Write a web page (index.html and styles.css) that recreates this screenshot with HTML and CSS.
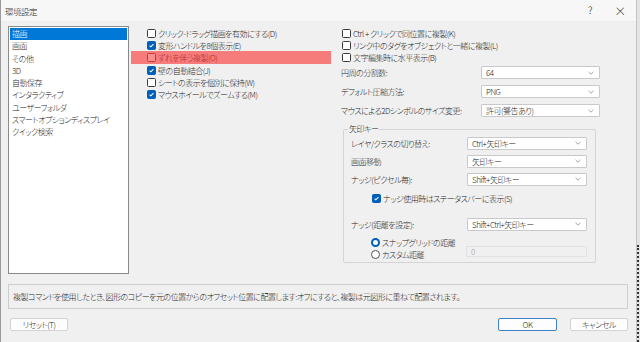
FILE: index.html
```html
<!DOCTYPE html>
<html lang="ja">
<head>
<meta charset="utf-8">
<title>環境設定</title>
<link rel="stylesheet" href="styles.css">
</head>
<body>
<div class="screen">
  <div class="dialog">
    <div class="titlebar">
      <span class="title">環境設定</span>
      <span class="tb-btns"><span class="tb-help">?</span><span class="tb-close">×</span></span>
    </div>
    <div class="content">
      <div class="top">
        <ul class="catlist">
          <li class="sel">描画</li>
          <li>画面</li>
          <li>その他</li>
          <li>3D</li>
          <li>自動保存</li>
          <li>インタラクティブ</li>
          <li>ユーザーフォルダ</li>
          <li>スマートオプションディスプレイ</li>
          <li>クイック検索</li>
        </ul>
        <div class="col1">
          <div class="cbrow"><span class="cb"></span><span>クリック-ドラッグ描画を有効にする(D)</span></div>
          <div class="cbrow"><span class="cb on"><svg viewBox="0 0 9 9"><path d="M2 4.7 L3.7 6.3 L7 2.8"/></svg></span><span>変形ハンドルを8個表示(E)</span></div>
          <div class="cbrow hl"><span class="cb"></span><span>ずれを伴う複製(O)</span></div>
          <div class="cbrow"><span class="cb on"><svg viewBox="0 0 9 9"><path d="M2 4.7 L3.7 6.3 L7 2.8"/></svg></span><span>壁の自動結合(J)</span></div>
          <div class="cbrow"><span class="cb"></span><span>シートの表示を個別に保持(W)</span></div>
          <div class="cbrow"><span class="cb on"><svg viewBox="0 0 9 9"><path d="M2 4.7 L3.7 6.3 L7 2.8"/></svg></span><span>マウスホイールでズームする(M)</span></div>
        </div>
        <div class="col2">
          <div class="cbrow"><span class="cb"></span><span>Ctrl + クリックで同位置に複製(K)</span></div>
          <div class="cbrow"><span class="cb"></span><span>リンク中のタグをオブジェクトと一緒に複製(L)</span></div>
          <div class="cbrow"><span class="cb"></span><span>文字編集時に水平表示(B)</span></div>
          <div class="frow"><span>円周の分割数:</span><span class="dd w119"><span>64</span><svg viewBox="0 0 6 4"><path d="M0.5 0.8 L3 3.2 L5.5 0.8"/></svg></span></div>
          <div class="frow"><span>デフォルト圧縮方法:</span><span class="dd w119"><span>PNG</span><svg viewBox="0 0 6 4"><path d="M0.5 0.8 L3 3.2 L5.5 0.8"/></svg></span></div>
          <div class="frow"><span>マウスによる2Dシンボルのサイズ変更:</span><span class="dd w119"><span>許可(警告あり)</span><svg viewBox="0 0 6 4"><path d="M0.5 0.8 L3 3.2 L5.5 0.8"/></svg></span></div>
          <div class="group">
            <span class="legend">矢印キー</span>
            <div class="grow"><span>レイヤ/クラスの切り替え:</span><span class="dd w120"><span>Ctrl+矢印キー</span><svg viewBox="0 0 6 4"><path d="M0.5 0.8 L3 3.2 L5.5 0.8"/></svg></span></div>
            <div class="grow"><span>画面移動</span><span class="dd w120"><span>矢印キー</span><svg viewBox="0 0 6 4"><path d="M0.5 0.8 L3 3.2 L5.5 0.8"/></svg></span></div>
            <div class="grow"><span>ナッジ(ピクセル毎):</span><span class="dd w120"><span>Shift+矢印キー</span><svg viewBox="0 0 6 4"><path d="M0.5 0.8 L3 3.2 L5.5 0.8"/></svg></span></div>
            <div class="cbrow gcb"><span class="cb on"><svg viewBox="0 0 9 9"><path d="M2 4.7 L3.7 6.3 L7 2.8"/></svg></span><span>ナッジ使用時はステータスバーに表示(S)</span></div>
            <div class="grow g5"><span>ナッジ(距離を設定):</span><span class="dd w120"><span>Shift+Ctrl+矢印キー</span><svg viewBox="0 0 6 4"><path d="M0.5 0.8 L3 3.2 L5.5 0.8"/></svg></span></div>
            <div class="radios">
              <div class="rrow"><span class="rb on"></span><span>スナップグリッドの距離</span></div>
              <div class="rrow r2"><span class="rlabel"><span class="rb"></span><span>カスタム距離</span></span><span class="field">0</span></div>
            </div>
          </div>
        </div>
      </div>
      <div class="desc">複製コマンドを使用したとき、図形のコピーを元の位置からのオフセット位置に配置します:オフにすると、複製は元図形に重ねて配置されます。</div>
      <div class="buttons">
        <span class="btn reset">リセット(T)</span>
        <span class="right">
          <span class="btn ok">OK</span>
          <span class="btn cancel">キャンセル</span>
        </span>
      </div>
    </div>
  </div>
  <div class="edge"><span class="edge-dark"></span></div>
</div>
</body>
</html>
```

FILE: styles.css
```css
* { box-sizing: border-box; }
html, body { margin: 0; padding: 0; }
body {
  width: 640px;
  height: 342px;
  overflow: hidden;
  background: #e9e9e9;
  font-family: "Noto Sans CJK JP", "Noto Sans", sans-serif;
  font-size: 8px;
  font-weight: 300;
  letter-spacing: -0.5px;
  font-feature-settings: "palt";
  color: #262626;
}
.screen { display: flex; width: 640px; height: 342px; }
.dialog {
  width: 637px;
  height: 342px;
  background: #f0f0f0;
  border-right: 1px solid #c4c4c4;
  border-left: 1px solid #9a9a9a;
  display: flex;
  flex-direction: column;
}
.edge { flex: 1; display: flex; flex-direction: column; justify-content: flex-end; background: #e4e4e4; }
.edge-dark { height: 97px; border-left: 2px dotted #333; }

.titlebar {
  height: 22px;
  background: #f7f7f7;
  border-bottom: 1px solid #ececec;
  display: flex;
  align-items: center;
  justify-content: space-between;
}
.title { padding-left: 4px; font-size: 8.5px; }
.tb-btns { display: flex; }
.tb-help { width: 30px; text-align: center; font-size: 10px; }
.tb-close { width: 30px; text-align: center; font-size: 12px; margin-right: 1px; }

.content { display: flex; flex-direction: column; padding-top: 4px; }
.top { display: flex; align-items: flex-start; }

.catlist {
  list-style: none;
  margin: 0 0 0 7px;
  padding: 1px 1px;
  width: 121px;
  height: 248px;
  background: #fff;
  border: 1px solid #8a8a8a;
}
.catlist li { height: 12.3px; line-height: 12.3px; padding-left: 2px; white-space: nowrap; }
.catlist li.sel { background: #0078d7; color: #fff; }

.cbrow { display: flex; align-items: center; height: 12px; white-space: nowrap; gap: 2px; }
.cb {
  width: 9px; height: 9px;
  border: 1px solid #3a3a3a;
  border-radius: 1.5px;
  background: #fff;
  flex: none;
  display: flex;
}
.cb.on { background: #005fb8; border-color: #005fb8; }
.cb svg { width: 7px; height: 7px; }
.cb svg path { stroke: #fff; stroke-width: 1.3; fill: none; }

.col1 { margin-left: 2px; width: 200px; padding-top: 1px; }
.col1 .cbrow { padding-left: 16px; }
.col1 .cbrow.hl { background: #f67c7c; color: #b02a2a; height: 13px; }
.col1 .cbrow.hl .cb { border-color: #c23838; background: #f88e8e; }

.col2 { margin-left: 10px; width: 260px; padding-top: 1px; }
.col2 > .cbrow { padding-left: 1px; }
.frow { display: flex; align-items: center; justify-content: space-between; height: 19px; padding-right: 1px; white-space: nowrap; }
.dd {
  height: 13px;
  background: #fff;
  border: 1px solid #c9c9c9;
  border-radius: 1px;
  display: flex;
  align-items: center;
  justify-content: space-between;
  padding: 0 5px 0 4px;
}
.dd svg { width: 6px; height: 4px; }
.dd svg path { stroke: #9a9a9a; stroke-width: 0.9; fill: none; }
.w119 { width: 119px; }
.w120 { width: 120px; }

.group {
  position: relative;
  margin: 9px 0 0 2px;
  width: 253px;
  border: 1px solid #d4d4d4;
  border-radius: 2px;
  padding: 4px 8px 2px 7px;
}
.legend { position: absolute; top: -7px; left: 4px; padding: 0 1px; background: #f0f0f0; }
.grow { display: flex; align-items: center; justify-content: space-between; height: 18px; white-space: nowrap; }
.gcb { height: 20px; padding-left: 21px; }
.g5 { margin-top: 7px; }
.radios { margin-top: 4px; }
.rrow { display: flex; align-items: center; height: 11.5px; padding-left: 20px; gap: 2px; white-space: nowrap; }
.rrow.r2 { justify-content: space-between; padding-left: 0; }
.rlabel { display: flex; align-items: center; gap: 2px; padding-left: 20px; }
.rb {
  width: 9px; height: 9px; border-radius: 50%;
  border: 1px solid #555; background: #fff; flex: none;
}
.rb.on { border: 2.5px solid #005fb8; background: #fff; }
.field {
  width: 121px; height: 11px;
  border: 1px solid #e2e2e2;
  color: #a0a0a0;
  padding-left: 4px;
  line-height: 9px;
  margin-top: -6px;
}

.desc {
  margin: 10px 8px 0 7px;
  height: 25px;
  border: 1px solid #cdcdcd;
  display: flex;
  align-items: center;
  padding-left: 4px;
  white-space: nowrap;
}
.buttons { display: flex; justify-content: space-between; margin-top: 9px; padding: 0 8px 0 9px; }
.btn {
  height: 13px;
  background: #fdfdfd;
  border: 1px solid #d3d3d3;
  border-radius: 2px;
  display: inline-flex;
  align-items: center;
  justify-content: center;
}
.reset { width: 58px; }
.right { display: flex; gap: 13px; }
.ok { width: 59px; border-color: #3d82c7; }
.cancel { width: 58px; }
```
